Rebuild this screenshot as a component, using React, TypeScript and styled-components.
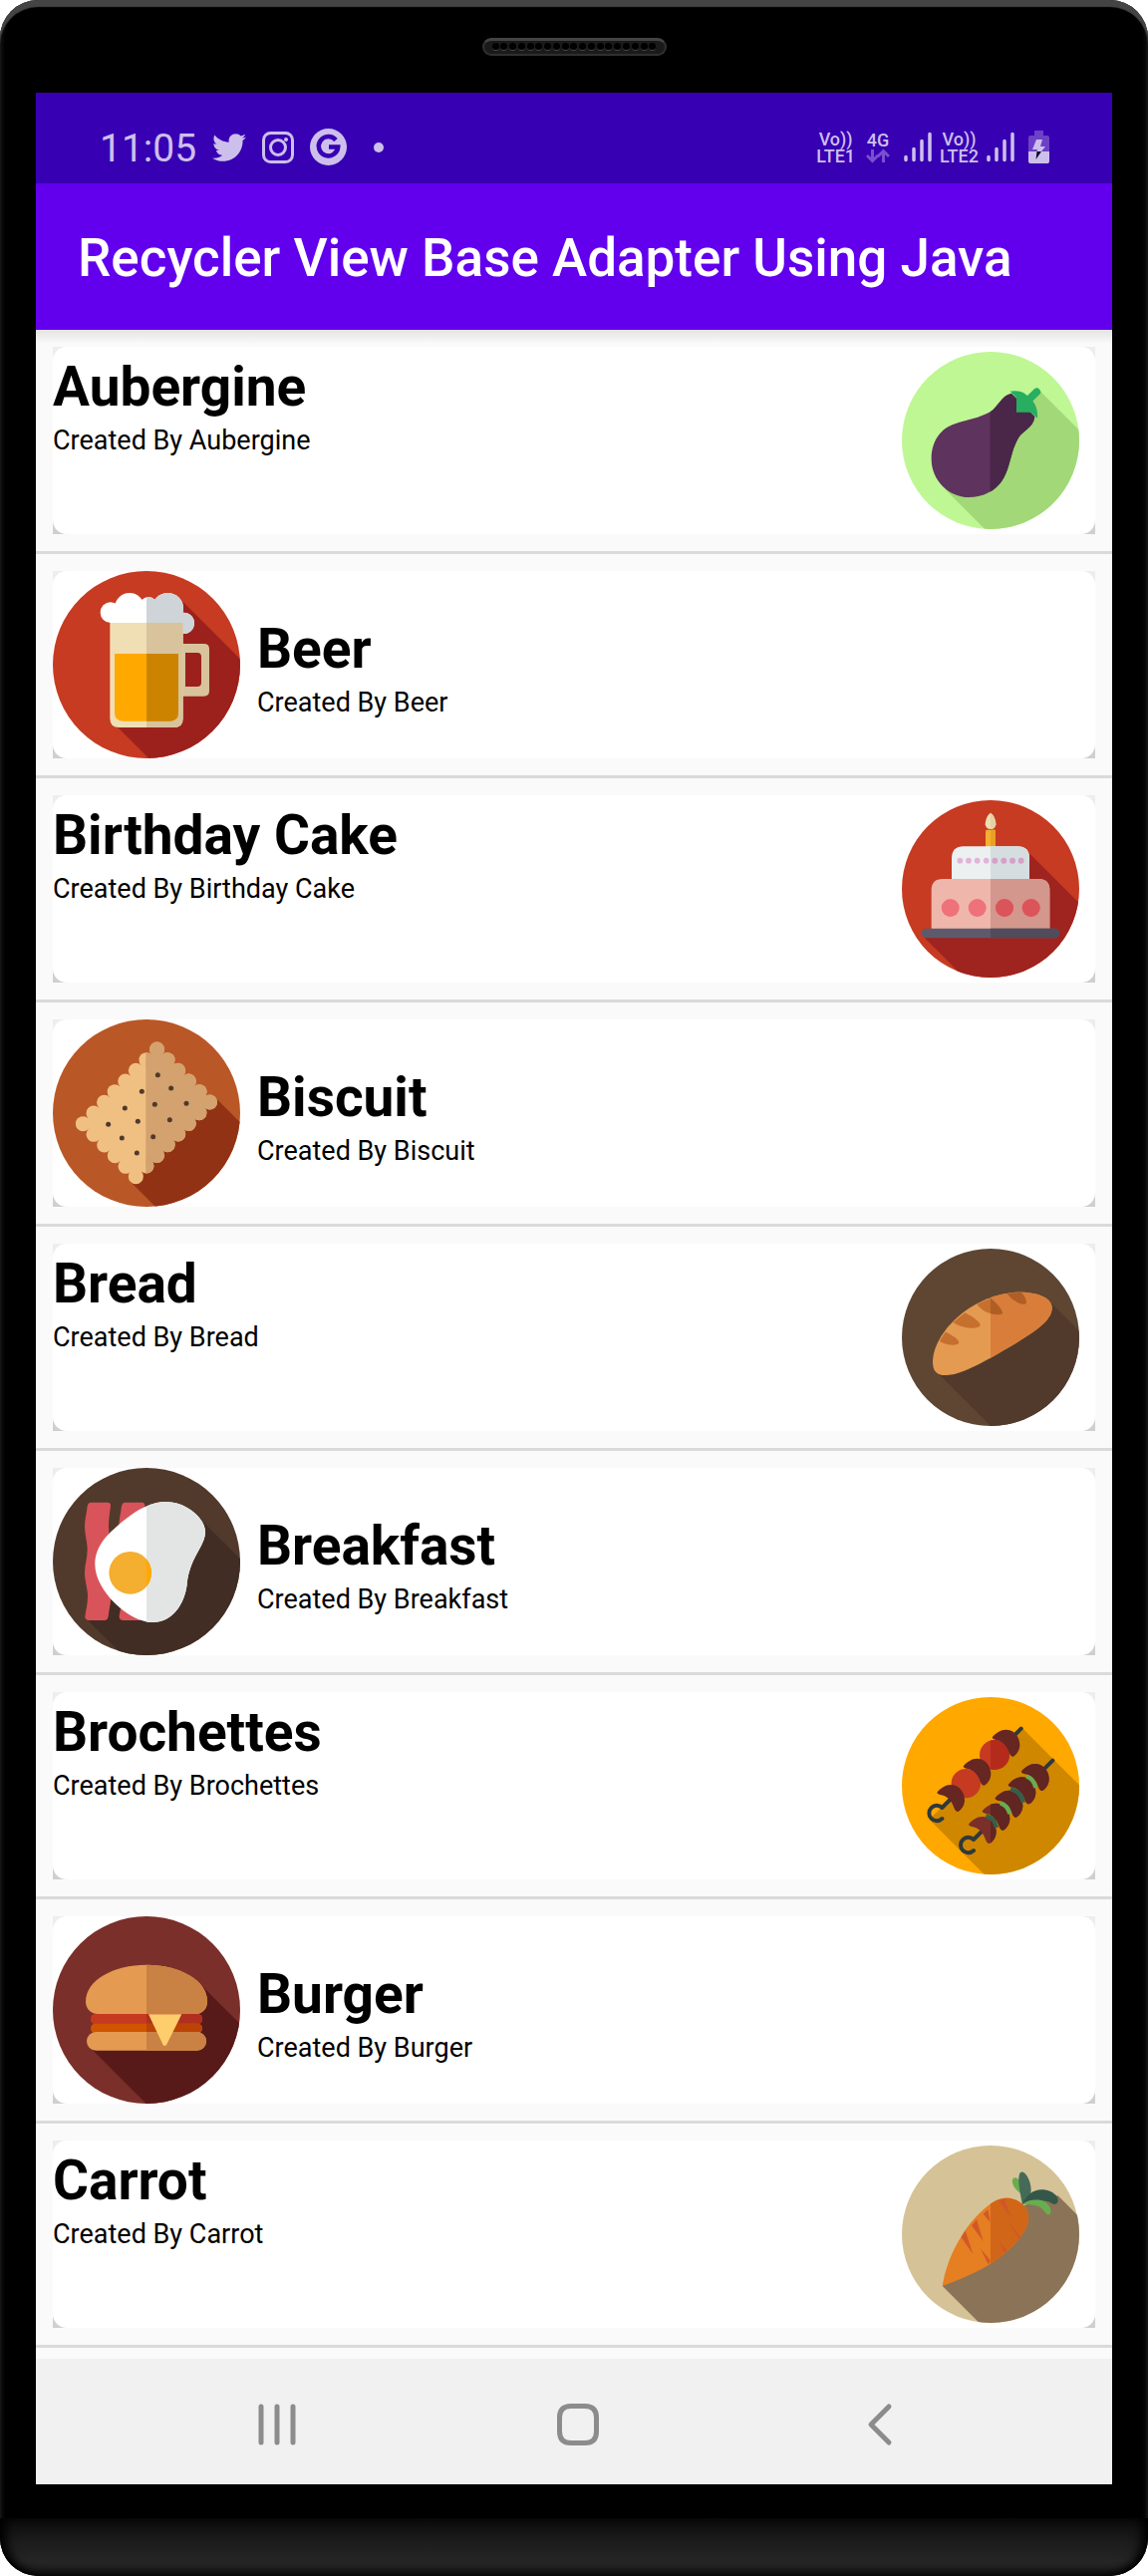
import React, { ReactNode, useId } from "react";
import styled, { createGlobalStyle } from "styled-components";
import { FaTwitter } from "react-icons/fa";

const ink = "#cdbfec";

const GlobalStyle = createGlobalStyle`
  * { box-sizing: border-box; }
  body {
    margin: 0;
    background: #fff;
    font-family: Roboto, "Noto Sans", sans-serif;
  }
  h1, h2, p, ul { margin: 0; padding: 0; }
`;

const Phone = styled.div`
  background: #000;
  border-radius: 38px;
  overflow: hidden;
  box-shadow: inset 0 7px 1px #444, inset 0 0 6px #2a2a2a;
`;

const Forehead = styled.div`
  height: 93px;
  display: flex;
  align-items: center;
  justify-content: center;
`;

const Speaker = styled.div`
  width: 185px;
  height: 18px;
  padding: 0 8px;
  border: 2px solid #303030;
  border-top: 3px solid #444;
  border-radius: 9px;
  background: #1a1a1a;
  display: flex;
  align-items: center;
  justify-content: space-between;
`;

const Hole = styled.span`
  width: 7px;
  height: 8px;
  border-radius: 4px;
  background: #000;
  border-bottom: 1px solid #4a4a4a;
`;

const Chin = styled.div`
  height: 92px;
  padding-top: 34px;
`;

const ChinPlate = styled.div`
  height: 58px;
  border-radius: 0 0 38px 38px;
  background: linear-gradient(#0a0a0a, #1c1c1c 40%, #252525 75%, #1c1c1c);
  box-shadow: inset 12px 0 12px -6px #000, inset -12px 0 12px -6px #000, inset 0 -4px 6px #0a0a0a;
`;

const Screen = styled.main`
  margin: 0 36px;
  background: #fafafa;
`;

const StatusBar = styled.div`
  height: 91px;
  padding: 18px 63px 0 64px;
  background: #3700b3;
  color: ${ink};
  display: flex;
  align-items: center;
  justify-content: space-between;
`;

const StatusGroup = styled.div<{ $gap: number }>`
  display: flex;
  align-items: center;
  gap: ${(p) => p.$gap}px;
`;

const Clock = styled.time`
  padding-top: 2px;
  font-size: 39px;
  line-height: 40px;
`;

const Dot = styled.span`
  width: 10px;
  height: 10px;
  margin-left: 11px;
  border-radius: 50%;
  background: ${ink};
`;

const Stack = styled.div`
  display: flex;
  flex-direction: column;
  align-items: center;
  font-size: 18px;
  line-height: 17px;
  font-weight: 500;
`;

const DataStack = styled(Stack)`
  margin: 0 6px 0 3px;
`;

const Battery = styled.svg`
  margin-left: 6px;
`;

const AppBar = styled.header`
  height: 147px;
  padding: 3px 42px 0;
  background: #6200ee;
  color: #fff;
  display: flex;
  align-items: center;
`;

const AppTitle = styled.h1`
  font-size: 53px;
  line-height: 64px;
  font-weight: 500;
  white-space: nowrap;
`;

const List = styled.ul`
  list-style: none;
  padding-bottom: 11px;
  background: linear-gradient(#e4e4e4, #fafafa 14px);
`;

const Row = styled.li`
  padding: 17px;
  border-bottom: 3px solid #dadada;
`;

const CardShade = styled.div`
  background: linear-gradient(#eee, #cfcfcf);
`;

const Card = styled.article<{ $pictureFirst: boolean }>`
  height: 188px;
  border-radius: 14px;
  background: #fff;
  display: flex;
  flex-direction: ${(p) => (p.$pictureFirst ? "row" : "row-reverse")};
  justify-content: ${(p) => (p.$pictureFirst ? "flex-start" : "space-between")};
  align-items: ${(p) => (p.$pictureFirst ? "center" : "flex-start")};
  gap: 17px;
`;

const Picture = styled.svg<{ $large: boolean }>`
  flex: none;
  width: ${(p) => (p.$large ? 188 : 178)}px;
  height: ${(p) => (p.$large ? 188 : 178)}px;
  margin: ${(p) => (p.$large ? "0" : "5px 16px 5px 0")};
`;

const Caption = styled.div<{ $centred: boolean }>`
  padding-top: ${(p) => (p.$centred ? 5 : 8)}px;
  display: flex;
  flex-direction: column;
  gap: 6px;
`;

const Name = styled.h2`
  font-size: 55px;
  line-height: 64px;
  font-weight: 700;
  color: #000;
`;

const Author = styled.p`
  font-size: 27px;
  line-height: 32px;
  color: #000;
`;

const NavBar = styled.nav`
  height: 126px;
  padding: 0 82px 0 91px;
  background: #f1f1f1;
  display: grid;
  grid-template-columns: repeat(3, 1fr);
`;

const NavButton = styled.button`
  border: 0;
  padding: 6px 0 0;
  background: none;
  display: flex;
  align-items: center;
  justify-content: center;
`;

/* Paints the same shape twice: lit on the left of the axis, shaded on the right. */
function Split({ x, left, right, children }: { x: number; left: string; right: string; children: ReactNode }) {
  const id = useId();
  return (
    <>
      <clipPath id={id}>
        <rect x={x} y="0" width="700" height="700" />
      </clipPath>
      <g fill={left}>{children}</g>
      <g fill={right} clipPath={`url(#${id})`}>{children}</g>
    </>
  );
}

function Round({ large, base, shade, shadow, children }: { large?: boolean; base: string; shade: string; shadow: string; children: ReactNode }) {
  const id = useId();
  const c = large ? { x: 351, y: 351, r: 282 } : { x: 342, y: 336, r: 267 };
  return (
    <Picture $large={!!large} viewBox={`${c.x - c.r} ${c.y - c.r} ${c.r * 2} ${c.r * 2}`} aria-hidden="true">
      <clipPath id={id}>
        <circle cx={c.x} cy={c.y} r={c.r} />
      </clipPath>
      <circle cx={c.x} cy={c.y} r={c.r} fill={base} />
      <path d={shadow} fill={shade} clipPath={`url(#${id})`} />
      {children}
    </Picture>
  );
}

const Aubergine = () => (
  <Round base="#bff794" shade="#a2d877" shadow="M492 188L640 336V640H362L205 483Z">
    <Split x={341} left="#5e345e" right="#4a2748">
      <path d="M164 392C164 340 190 300 235 286C270 274 310 268 341 250C365 235 375 200 405 195L475 265C470 300 440 305 425 330C400 375 402 420 375 460C355 488 320 507 277 507C215 507 164 455 164 392Z" />
    </Split>
    <path d="M401 188C430 182 447 195 453 201L470 218C482 235 484 250 483 269L463 251H420V208Z" fill="#28ae61" />
    <path d="M458 212L481 190" stroke="#28ae61" strokeWidth="23" strokeLinecap="round" />
  </Round>
);

const Beer = () => (
  <Round large base="#c63b22" shade="#9c211c" shadow="M462 163L660 361V660H385L262 537Z">
    <Split x={351} left="#fff" right="#cfd4d8">
      <circle cx="243" cy="194" r="31" />
      <circle cx="300" cy="180" r="45" />
      <circle cx="357" cy="174" r="27" />
      <circle cx="415" cy="182" r="47" />
      <circle cx="463" cy="226" r="32" />
      <rect x="243" y="175" width="205" height="52" />
    </Split>
    <path fillRule="evenodd" fill="#d8c39c" d="M455 288H524Q540 288 540 304V430Q540 446 524 446H455ZM468 315V417H504Q516 417 516 405V327Q516 315 504 315Z" />
    <Split x={351} left="#f0deb4" right="#d8c39c">
      <path d="M241 225H461V512Q461 540 433 540H269Q241 540 241 512Z" />
    </Split>
    <Split x={351} left="#ffa800" right="#cc8400">
      <path d="M255 318H447V496Q447 521 422 521H280Q255 521 255 496Z" />
    </Split>
  </Round>
);

const Cake = () => (
  <Round base="#c63b22" shade="#9f231e" shadow="M457 227L640 410V640H300L140 480Z">
    <Split x={342} left="#efdeb2" right="#e6d0a4">
      <path d="M342 107C352 113 358 130 358 142Q356 156 342 156Q328 156 326 142C326 130 332 113 342 107Z" />
    </Split>
    <Split x={342} left="#f5b02f" right="#e9a024">
      <rect x="327" y="158" width="30" height="54" rx="3" />
    </Split>
    <Split x={342} left="#ecf0f1" right="#d5dde0">
      <path d="M225 306V244Q225 208 261 208H423Q459 208 459 244V306Z" />
    </Split>
    <Split x={342} left="#e2b3d6" right="#d5a0c7">
      {[250, 276, 302, 329, 355, 382, 408, 434].map((x) => <circle key={x} cx={x} cy="251" r="8.5" />)}
    </Split>
    <Split x={342} left="#efb7ac" right="#d3978d">
      <path d="M164 456V340Q164 306 198 306H486Q520 306 520 340V456Z" />
    </Split>
    <Split x={342} left="#ef7179" right="#da5459">
      {[221, 302, 384, 464].map((x) => <circle key={x} cx={x} cy="393" r="27" />)}
    </Split>
    <Split x={342} left="#5f5a6b" right="#504c5c">
      <rect x="134" y="455" width="416" height="29" rx="14" />
    </Split>
  </Round>
);

const longEdge = [0, 1, 2, 3, 4, 5, 6, 7];
const shortEdge = [1, 2, 3, 4];
const pricks = [[385, 236], [337, 286], [425, 276], [286, 336], [376, 325], [471, 322], [236, 385], [325, 376], [421, 371], [277, 426], [371, 422], [322, 471]];

const Biscuit = () => (
  <Round large base="#ba5726" shade="#923215" shadow="M559 305L660 406V660H405L304 559Z">
    <Split x={349} left="#f0c083" right="#d3a26e">
      <path d="M382 159L542 319L319 542L160 383Z" />
      {longEdge.map((i) => (
        <React.Fragment key={i}>
          <circle cx={160 + i * 31.8} cy={383 - i * 32} r="22.5" />
          <circle cx={319 + i * 31.8} cy={542 - i * 32} r="22.5" />
        </React.Fragment>
      ))}
      {shortEdge.map((i) => (
        <React.Fragment key={i}>
          <circle cx={382 + i * 32} cy={159 + i * 32} r="22.5" />
          <circle cx={160 + i * 32} cy={383 + i * 32} r="22.5" />
        </React.Fragment>
      ))}
    </Split>
    {pricks.map(([x, y]) => <circle key={x} cx={x} cy={y} r="7.5" fill="#4f3a2c" />)}
  </Round>
);

const Bread = () => (
  <Round base="#5e4633" shade="#513a2c" shadow="M525 233L640 348V640H380L183 443Z">
    <Split x={342} left="#e49a51" right="#d87d3a">
      <path d="M168 410C168 320 290 201 430 200C490 200 527 220 527 247C527 290 470 325 342 398C270 437 235 450 205 450C180 450 168 437 168 410Z" />
    </Split>
    <Split x={342} left="#c6702f" right="#b05e25">
      <path d="M206 320C225 328 247 342 247 352C245 362 210 362 188 347Z" />
      <path d="M265 262C290 275 312 290 311 301C303 314 255 309 229 291Z" />
      <path d="M342 218C360 232 380 255 378 265C370 270 325 270 301 236Z" />
      <path d="M392 204L434 200C445 212 453 228 448 235C432 240 408 225 392 204Z" />
    </Split>
  </Round>
);

const bacon = "M184 173H235Q244 174 243 184C240 205 237 225 237 245C237 270 244 290 244 315C244 340 237 360 237 385C237 410 244 430 244 455C244 478 237 500 236 517Q234 528 225 528H176Q165 527 166 515C169 495 174 478 174 455C174 430 165 412 165 385C165 360 173 340 173 315C173 290 165 270 165 245C165 225 171 205 173 184Q175 174 184 173Z";

const Breakfast = () => (
  <Round large base="#513a2c" shade="#412d23" shadow="M520 230L660 370V660H307L175 528Z">
    <path d={bacon} fill="#d8545a" />
    <path d={bacon} fill="#d8545a" transform="translate(103 0)" />
    <Split x={351} left="#fff" right="#e2e5e4">
      <path d="M410 171C470 171 528 220 528 262C528 305 480 340 473 420C465 480 430 534 368 534C300 534 196 440 196 360C196 300 240 265 270 238C320 195 365 171 410 171Z" />
    </Split>
    <Split x={351} left="#f4ae30" right="#ffa800">
      <circle cx="302" cy="385" r="64" />
    </Split>
  </Round>
);

const chunk = "M0 0C10 -12 25 -22 40 -22C65 -22 82 0 82 24C82 40 72 55 62 59C55 60 52 52 48 42C42 25 28 10 8 8C0 6 -2 3 0 0Z";
const Chunk = ({ x, y }: { x: number; y: number }) => <path d={chunk} transform={`translate(${x} ${y})`} />;
const skewer = "M434 164L196 402A23 23 0 1 0 196 435";

const Brochettes = () => (
  <Round base="#ffa800" shade="#cf8700" shadow="M438 163L640 365V640H360L165 445V430Z">
    <g fill="none" stroke="#2f393b" strokeWidth="12" strokeLinecap="round" strokeLinejoin="round">
      <path d={skewer} />
      <path d={skewer} transform="translate(95 96)" />
    </g>
    <Split x={342} left="#c63a22" right="#b42b1c">
      <circle cx="354" cy="243" r="45" />
      <circle cx="268" cy="329" r="44" />
    </Split>
    <g fill="#662622">
      <Chunk x={348} y={189} />
      <Chunk x={261} y={276} />
      <Chunk x={182} y={355} />
    </g>
    <Split x={342} left="#7a2f2a" right="#612522">
      <Chunk x={436} y={292} />
      <Chunk x={396} y={332} />
      <Chunk x={357} y={372} />
      <Chunk x={318} y={411} />
      <Chunk x={277} y={451} />
    </Split>
    <g fill="none" strokeWidth="13">
      <path d="M450 308C464 312 474 324 478 342" stroke="#68ae4f" />
      <path d="M402 346C420 350 436 364 441 386" stroke="#34604a" />
      <path d="M371 388C386 392 396 404 400 421" stroke="#68ae4f" />
      <path d="M328 427C344 430 356 442 360 462" stroke="#34604a" />
    </g>
  </Round>
);

const Burger = () => (
  <Round large base="#7a2f2a" shade="#571a19" shadow="M515 275L660 420V660H377L183 466Z">
    <Split x={351} left="#c63a22" right="#b12f20">
      <rect x="183" y="363" width="336" height="31" rx="14" />
    </Split>
    <Split x={351} left="#d15500" right="#ba4305">
      <rect x="183" y="392" width="336" height="29" rx="14" />
    </Split>
    <Split x={351} left="#e49a51" right="#ca8144">
      <path d="M168 325C168 262 250 215 351 215C452 215 534 262 534 325C534 347 520 363 500 363H204C182 363 168 347 168 325Z" />
      <rect x="171" y="417" width="360" height="56" rx="28" />
    </Split>
    <path d="M357 364H457L411 456Q406 462 401 456Z" fill="#ffce6c" />
  </Round>
);

const Carrot = () => (
  <Round base="#d5c397" shade="#8a7357" shadow="M545 220L650 325V650H355L197 492L440 250Z">
    <Split x={342} left="#e67e22" right="#d16618">
      <path d="M197 492C212 400 265 305 335 250C360 230 383 226 401 228C440 236 460 262 456 295C452 325 425 358 395 385C345 432 280 462 197 492Z" />
    </Split>
    <g fill="#d05828">
      <path d="M254 345L266 325L289 396Z" />
      <path d="M285 310L300 292L320 358Z" />
      <path d="M320 275L334 262L341 300Z" />
      <path d="M366 236L384 230L403 284Z" />
      <path d="M397 300L433 345L428 352Z" />
      <path d="M366 358L392 384L384 392Z" />
      <path d="M311 378L341 415L336 428Z" />
    </g>
    <path d="M437 215C415 205 402 180 410 168C422 158 438 180 440 215Z" fill="#68ae4f" />
    <path d="M438 246C432 215 420 165 432 150C445 140 465 175 464 205C462 225 450 238 438 246Z" fill="#456b58" />
    <path d="M438 246C450 215 475 200 500 202C530 205 548 222 545 238C540 248 530 248 522 240C500 232 460 235 438 246Z" fill="#34574a" />
    <path d="M438 246C455 230 485 230 502 236C520 245 530 268 520 277C508 280 505 262 490 254C472 246 455 248 438 246Z" fill="#68ae4f" />
  </Round>
);

const foods: [string, () => ReactNode][] = [
  ["Aubergine", Aubergine],
  ["Beer", Beer],
  ["Birthday Cake", Cake],
  ["Biscuit", Biscuit],
  ["Bread", Bread],
  ["Breakfast", Breakfast],
  ["Brochettes", Brochettes],
  ["Burger", Burger],
  ["Carrot", Carrot],
];

const InstagramIcon = () => (
  <svg width="32" height="32" viewBox="0 0 32 32" fill="none" stroke={ink} strokeWidth="3">
    <rect x="1.5" y="1.5" width="29" height="29" rx="7" />
    <circle cx="16" cy="16" r="7.5" />
    <circle cx="24" cy="8" r="2" fill={ink} stroke="none" />
  </svg>
);

const GoogleIcon = () => (
  <svg width="37" height="37" viewBox="0 0 37 37" fill="none">
    <circle cx="18.5" cy="18.5" r="18.5" fill={ink} />
    <path d="M26 11.5A9.7 9.7 0 1 0 28.2 18.5H19" stroke="#3700b3" strokeWidth="4.5" />
  </svg>
);

const TrafficIcon = () => (
  <svg width="24" height="15" viewBox="0 0 24 15" fill="none" stroke="#7a50cf" strokeWidth="3">
    <path d="M6.500 1V12M1 7L6.500 12.500L12 7M17.500 14V3M12 8L17.500 2.500L23 8" />
  </svg>
);

const SignalIcon = () => (
  <svg width="28" height="31" viewBox="0 0 28 31" stroke={ink} strokeWidth="3.5" strokeLinecap="round">
    <path d="M2 25.500V28.500M10 17.500V28.500M18 9.500V28.500M26 2.500V28.500" />
  </svg>
);

const BatteryIcon = () => (
  <Battery width="21" height="33" viewBox="0 0 21 33">
    <path d="M6 0H15V5H19Q21 5 21 7V21H0V7Q0 5 2 5H6Z" fill="#6d40c8" />
    <path d="M0 21H21V31Q21 33 19 33H2Q0 33 0 31Z" fill={ink} />
    <path d="M8 9H14L12 16H17L13 21H8.500L9 19H4Z" fill={ink} />
    <path d="M8.500 21H13L7.500 29Z" fill="#12082e" />
  </Battery>
);

const NavIcon = ({ d }: { d: string }) => (
  <svg width="44" height="44" viewBox="0 0 44 44" fill="none" stroke="#8c8c8c" strokeWidth="5" strokeLinecap="round" strokeLinejoin="round">
    <path d={d} />
  </svg>
);

export default function App() {
  return (
    <>
      <GlobalStyle />
      <Phone>
        <Forehead>
          <Speaker>
            {Array.from({ length: 19 }, (_, i) => <Hole key={i} />)}
          </Speaker>
        </Forehead>
        <Screen>
          <StatusBar>
            <StatusGroup $gap={16}>
              <Clock>11:05</Clock>
              <FaTwitter size={34} />
              <InstagramIcon />
              <GoogleIcon />
              <Dot />
            </StatusGroup>
            <StatusGroup $gap={8}>
              <Stack><span>Vo))</span><span>LTE1</span></Stack>
              <DataStack><span>4G</span><TrafficIcon /></DataStack>
              <SignalIcon />
              <Stack><span>Vo))</span><span>LTE2</span></Stack>
              <SignalIcon />
              <BatteryIcon />
            </StatusGroup>
          </StatusBar>
          <AppBar>
            <AppTitle>Recycler View Base Adapter Using Java</AppTitle>
          </AppBar>
          <List>
            {foods.map(([name, Drawing], i) => {
              const pictureFirst = i % 2 === 1;
              return (
                <Row key={name}>
                  <CardShade>
                    <Card $pictureFirst={pictureFirst}>
                      <Drawing />
                      <Caption $centred={pictureFirst}>
                        <Name>{name}</Name>
                        <Author>Created By {name}</Author>
                      </Caption>
                    </Card>
                  </CardShade>
                </Row>
              );
            })}
          </List>
          <NavBar aria-label="System">
            <NavButton aria-label="Recent apps"><NavIcon d="M6 4V40M22 4V40M38 4V40" /></NavButton>
            <NavButton aria-label="Home"><NavIcon d="M15 3.500H29Q40.500 3.500 40.500 15V29Q40.500 40.500 29 40.500H15Q3.500 40.500 3.500 29V15Q3.500 3.500 15 3.500Z" /></NavButton>
            <NavButton aria-label="Back"><NavIcon d="M31 4L13 22L31 40" /></NavButton>
          </NavBar>
        </Screen>
        <Chin>
          <ChinPlate />
        </Chin>
      </Phone>
    </>
  );
}
